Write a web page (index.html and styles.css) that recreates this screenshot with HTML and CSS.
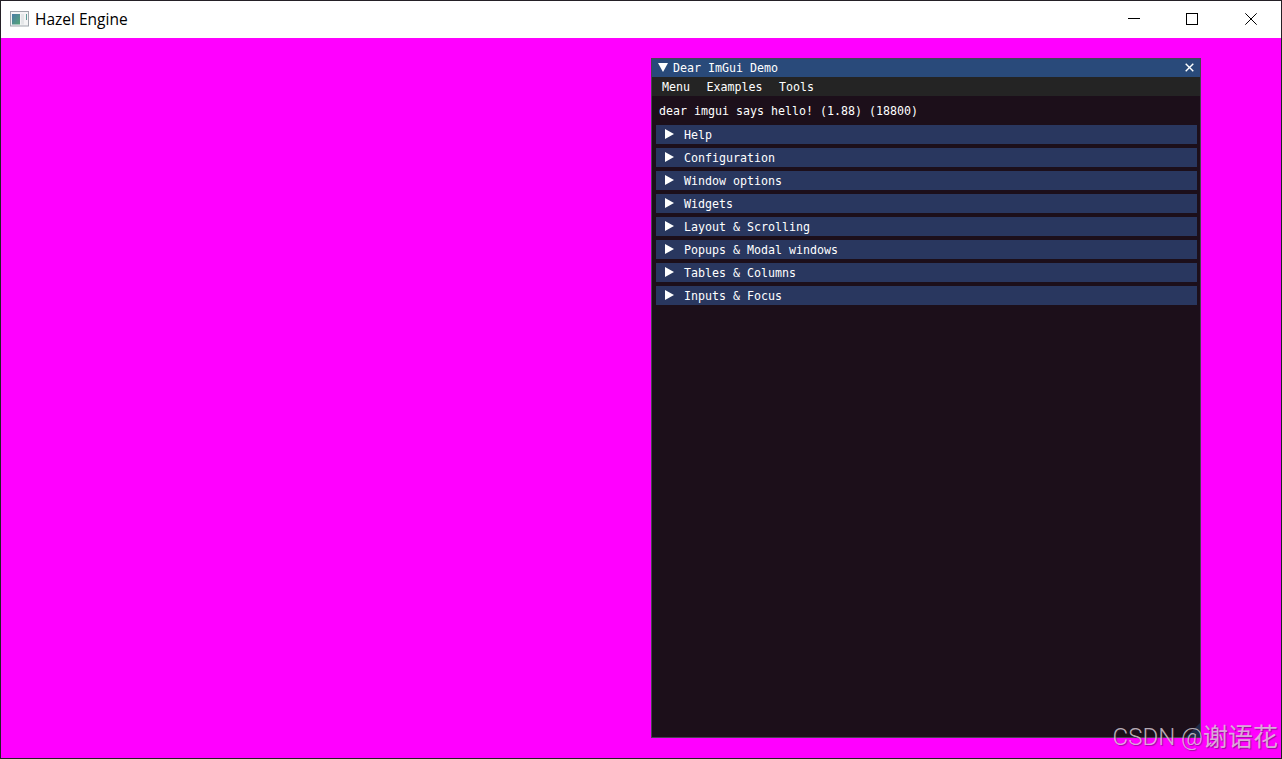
FILE: index.html
```
<!DOCTYPE html>
<html lang="en">

<head>
  <meta charset="UTF-8">
  <meta name="viewport" content="width=device-width, initial-scale=1.0">
  <title>Hazel Engine</title>
  <link rel="stylesheet" href="styles.css">
</head>

<body>
  <div class="app">
    <header class="titlebar">
      <svg class="app-icon" width="19" height="16" viewBox="0 0 19 16">
        <defs>
          <linearGradient id="pane" x1="0" y1="0" x2="1" y2="1">
            <stop offset="0" stop-color="#4a7ba6"/>
            <stop offset="1" stop-color="#55a777"/>
          </linearGradient>
        </defs>
        <rect x="0.5" y="0.5" width="18" height="14.5" fill="#f4f4f5" stroke="#a0a6ac"/>
        <rect x="2" y="3" width="8" height="10.5" fill="url(#pane)"/>
        <rect x="11" y="3" width="3" height="10.5" fill="#e4e6e8"/>
        <rect x="16" y="3" width="1" height="6" fill="#5f9c98"/>
      </svg>
      <span class="app-title">Hazel Engine</span>
      <div class="controls">
        <svg width="12" height="12" viewBox="0 0 12 12"><path d="M0 5.5H12"/></svg>
        <svg width="12" height="12" viewBox="0 0 12 12"><rect x="0.5" y="0.5" width="11" height="11"/></svg>
        <svg width="12" height="12" viewBox="0 0 12 12"><path d="M0.3 0.3L11.7 11.7M11.7 0.3L0.3 11.7"/></svg>
      </div>
    </header>

    <main class="viewport">
      <section class="demo">
        <div class="demo-title">
          <svg width="10" height="9" viewBox="0 0 10 9"><path d="M0 0H10L5 9Z"/></svg>
          <span>Dear ImGui Demo</span>
          <svg class="demo-close" width="9" height="9" viewBox="0 0 9 9"><path d="M0.7 0.7L8.3 8.3M8.3 0.7L0.7 8.3"/></svg>
        </div>
        <nav class="menu">
          <span>Menu</span>
          <span>Examples</span>
          <span>Tools</span>
        </nav>
        <div class="content">
          <p class="hello">dear imgui says hello! (1.88) (18800)</p>
          <div class="section"><svg width="9" height="10" viewBox="0 0 9 10"><path d="M0 0L9 5L0 10Z"/></svg>Help</div>
          <div class="section"><svg width="9" height="10" viewBox="0 0 9 10"><path d="M0 0L9 5L0 10Z"/></svg>Configuration</div>
          <div class="section"><svg width="9" height="10" viewBox="0 0 9 10"><path d="M0 0L9 5L0 10Z"/></svg>Window options</div>
          <div class="section"><svg width="9" height="10" viewBox="0 0 9 10"><path d="M0 0L9 5L0 10Z"/></svg>Widgets</div>
          <div class="section"><svg width="9" height="10" viewBox="0 0 9 10"><path d="M0 0L9 5L0 10Z"/></svg>Layout &amp; Scrolling</div>
          <div class="section"><svg width="9" height="10" viewBox="0 0 9 10"><path d="M0 0L9 5L0 10Z"/></svg>Popups &amp; Modal windows</div>
          <div class="section"><svg width="9" height="10" viewBox="0 0 9 10"><path d="M0 0L9 5L0 10Z"/></svg>Tables &amp; Columns</div>
          <div class="section"><svg width="9" height="10" viewBox="0 0 9 10"><path d="M0 0L9 5L0 10Z"/></svg>Inputs &amp; Focus</div>
        </div>
        <svg class="grip" width="14" height="14" viewBox="0 0 14 14"><path d="M14 0V14H0Z"/></svg>
      </section>
    </main>
    <div class="watermark"><span class="latin">CSDN @</span><span>谢语花</span></div>
  </div>
</body>

</html>
```
FILE: styles.css
```
body {
  margin: 0;
  overflow: hidden;
}

.app {
  position: relative;
  display: flex;
  flex-direction: column;
  box-sizing: border-box;
  width: 1282px;
  height: 759px;
  border: 1px solid #242026;
  background-color: #ff00ff;
}

.titlebar {
  display: flex;
  align-items: center;
  box-sizing: border-box;
  height: 37px;
  padding: 0 24px 1px 9px;
  background-color: #fff;
}

.app-icon {
  margin-right: 6px;
}

.app-title {
  font-family: "Open Sans", "Noto Sans", sans-serif;
  font-size: 15.5px;
  line-height: 20px;
  color: #000;
}

.controls {
  display: flex;
  gap: 46px;
  margin-left: auto;
}

.controls svg {
  fill: none;
  stroke: #000;
  stroke-width: 1;
}

.controls svg:last-child {
  margin-left: 1px;
}

.viewport {
  display: flex;
  justify-content: flex-end;
  padding: 20px 80px 20px 0;
}

.demo {
  position: relative;
  box-sizing: border-box;
  width: 550px;
  height: 680px;
  border: 1px solid #4b4354;
  background-color: #1c0f1a;
  font-family: "DejaVu Sans Mono", monospace;
  font-size: 11.63px;
  line-height: 19px;
  color: #fff;
}

.demo-title {
  display: flex;
  align-items: center;
  height: 18px;
  padding: 0 6px;
  background-color: #294a7a;
}

.demo-title svg {
  margin-right: 5px;
  margin-bottom: 1px;
  fill: #fff;
}

.demo-title .demo-close {
  margin-left: auto;
  margin-right: 0;
  fill: none;
  stroke: #fff;
  stroke-width: 1.4;
}

.menu {
  display: flex;
  gap: 16.5px;
  height: 19px;
  padding-left: 10px;
  background-color: #242424;
  line-height: 21px;
}

.content {
  padding: 6px 3px 0 4px;
}

.hello {
  margin: 0 0 4px 3px;
}

.section {
  display: flex;
  align-items: center;
  box-sizing: border-box;
  height: 19px;
  margin-bottom: 4px;
  padding: 2px 0 0 9px;
  background-color: #29375f;
}

.section svg {
  margin-right: 10px;
  margin-bottom: 3px;
  fill: #fff;
}

.grip {
  position: absolute;
  right: 0;
  bottom: 0;
  fill: #1e2d4a;
}

.watermark {
  position: absolute;
  right: 3px;
  bottom: 5px;
  display: flex;
  align-items: center;
  height: 36px;
  font-family: "Noto Sans CJK SC", sans-serif;
  font-size: 25px;
  line-height: 36px;
  color: rgba(222, 214, 222, 0.8);
  text-shadow: 1px 1px 1px rgba(60, 30, 60, 0.5);
  white-space: nowrap;
}

.latin {
  padding-top: 3px;
  font-family: Roboto, sans-serif;
  font-size: 24px;
  font-weight: 350;
}
```
